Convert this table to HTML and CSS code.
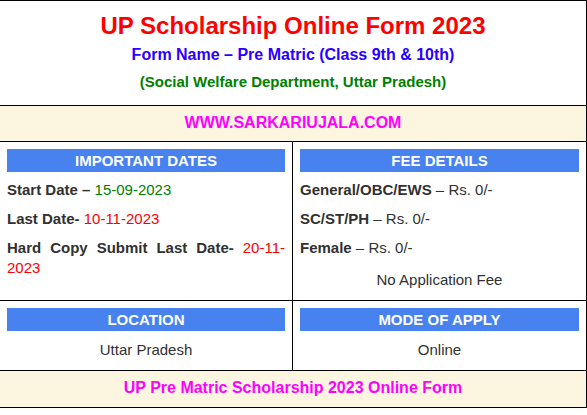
FILE: index.html
```html
<!DOCTYPE html>
<html>
<head>
<meta charset="utf-8">
<link rel="stylesheet" href="styles.css">
</head>
<body>
<div class="sheet">
  <div class="row head">
    <div class="title">UP Scholarship Online Form 2023</div>
    <div class="subtitle">Form Name – Pre Matric (Class 9th &amp; 10th)</div>
    <div class="dept">(Social Welfare Department, Uttar Pradesh)</div>
  </div>
  <div class="row banner">WWW.SARKARIUJALA.COM</div>
  <div class="row split">
    <div class="cell left">
      <div class="bar">IMPORTANT DATES</div>
      <p class="item"><b>Start Date –</b> <span class="green">15-09-2023</span></p>
      <p class="item"><b>Last Date-</b> <span class="red">10-11-2023</span></p>
      <p class="item"><b>Hard Copy Submit Last Date-</b> <span class="red">20-11-<wbr>2023</span></p>
    </div>
    <div class="cell">
      <div class="bar">FEE DETAILS</div>
      <p class="item"><b>General/OBC/EWS</b> – Rs. 0/-</p>
      <p class="item"><b>SC/ST/PH</b> – Rs. 0/-</p>
      <p class="item"><b>Female</b> – Rs. 0/-</p>
      <p class="item center note">No Application Fee</p>
    </div>
  </div>
  <div class="row split">
    <div class="cell left">
      <div class="bar">LOCATION</div>
      <p class="item center single">Uttar Pradesh</p>
    </div>
    <div class="cell">
      <div class="bar">MODE OF APPLY</div>
      <p class="item center single">Online</p>
    </div>
  </div>
  <div class="row banner last">UP Pre Matric Scholarship 2023 Online Form</div>
</div>
</body>
</html>
```

FILE: styles.css
```css
html, body {
  margin: 0;
  padding: 0;
  background: #ffffff;
}

body {
  font-family: "Liberation Sans", Arial, sans-serif;
  color: #313131;
}

.sheet {
  width: 588px;
  box-sizing: border-box;
  margin-left: -1px;
  border: 1px solid #000;
}

.row {
  border-bottom: 1px solid #000;
}

.row.last {
  border-bottom: none;
}

.head {
  padding: 10px 0 11px;
  text-align: center;
  font-weight: bold;
}

.title {
  font-size: 24px;
  line-height: 30px;
  color: #ff0000;
}

.subtitle {
  margin-top: 2px;
  font-size: 16px;
  line-height: 24px;
  color: #2a00ff;
}

.dept {
  margin-top: 3px;
  font-size: 15px;
  line-height: 24px;
  color: #008000;
}

.banner {
  background: #fcf5e0;
  text-align: center;
  font-size: 16px;
  font-weight: bold;
  line-height: 33px;
  padding-bottom: 2px;
  color: #ff00ff;
}

.banner.last {
  line-height: 34px;
}

.split {
  display: grid;
  grid-template-columns: 293px 293px;
}

.cell {
  padding: 7px 7px 10px;
  font-size: 15px;
}

.cell.left {
  border-right: 1px solid #000;
}

.bar {
  height: 23px;
  line-height: 23px;
  background: #4782ef;
  color: #ffffff;
  font-weight: bold;
  text-align: center;
  margin-bottom: 8px;
}

.item {
  margin: 0 0 9px;
  line-height: 20px;
  text-align: justify;
}

.item b {
  font-weight: bold;
}

.item.center {
  text-align: center;
}

.item.note {
  margin-top: 12px;
  margin-bottom: 0;
}

.item.single {
  margin-top: 9px;
  margin-bottom: 0;
}

.green {
  color: #008000;
}

.red {
  color: #ff0000;
}
```
